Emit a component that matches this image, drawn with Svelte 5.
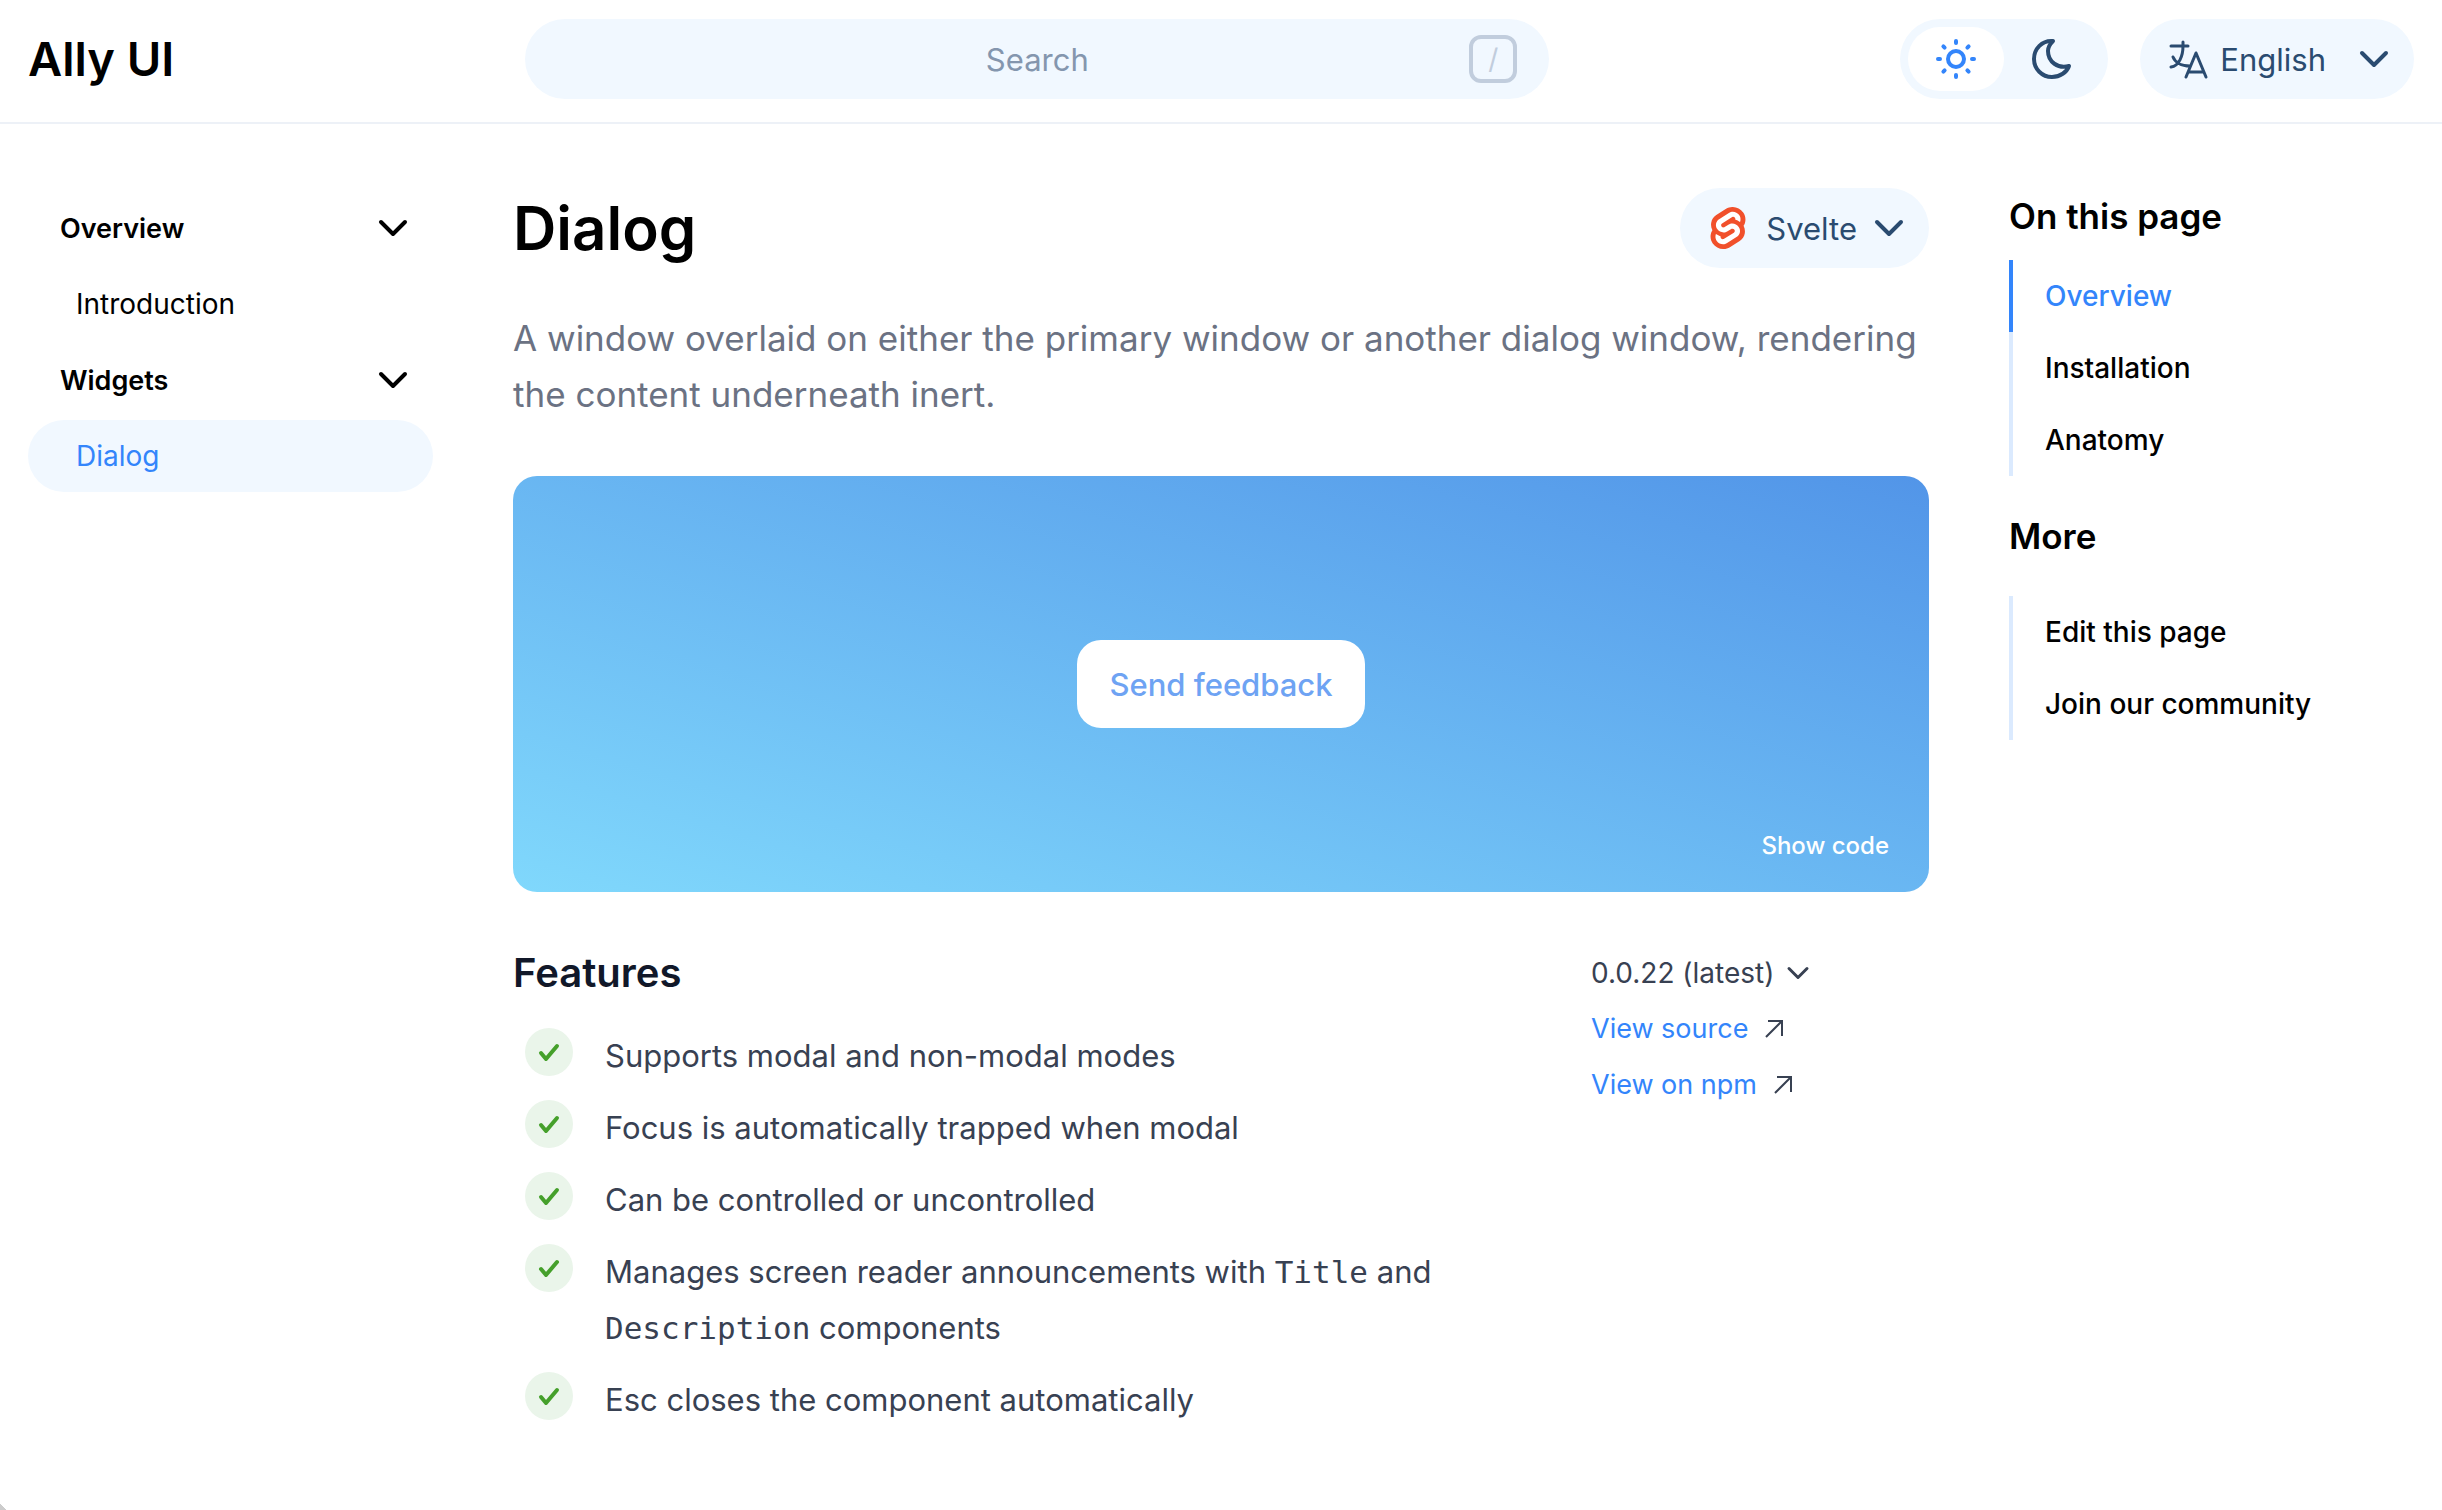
<script lang="ts">
  type Section = { title: string; items: { label: string; current?: boolean }[] };

  const sections: Section[] = [
    { title: 'Overview', items: [{ label: 'Introduction' }] },
    { title: 'Widgets', items: [{ label: 'Dialog', current: true }] }
  ];
  const contents = ['Overview', 'Installation', 'Anatomy'];
  const more = ['Edit this page', 'Join our community'];
  const links = ['View source', 'View on npm'];
  const features: { text: string; code?: boolean }[][] = [
    [{ text: 'Supports modal and non-modal modes' }],
    [{ text: 'Focus is automatically trapped when modal' }],
    [{ text: 'Can be controlled or uncontrolled' }],
    [
      { text: 'Manages screen reader announcements with ' },
      { text: 'Title', code: true },
      { text: ' and ' },
      { text: 'Description', code: true },
      { text: ' components' }
    ],
    [{ text: 'Esc closes the component automatically' }]
  ];

  let active = $state('Overview');
  let theme = $state('light');
</script>

{#snippet chevron()}
  <svg class="chevron" viewBox="0 0 32 20" aria-hidden="true"><path d="M4 4l12 12L28 4" /></svg>
{/snippet}

<header class="topbar">
  <a class="brand" href="#home">Ally UI</a>
  <label class="search">
    <input type="text" placeholder="Search" aria-label="Search" />
    <kbd>/</kbd>
  </label>
  <div class="tools">
    <div class="themes">
      <button class="theme" class:on={theme === 'light'} aria-label="Light theme" onclick={() => (theme = 'light')}>
        <svg viewBox="0 0 48 48" aria-hidden="true">
          <circle cx="24" cy="24" r="8" />
          <path d="M24 6v2M24 40v2M6 24h2M40 24h2M11.4 11.4l1.2 1.2M35.4 35.4l1.2 1.2M11.4 36.6l1.2-1.2M35.4 12.6l1.2-1.2" />
        </svg>
      </button>
      <button class="theme" class:on={theme === 'dark'} aria-label="Dark theme" onclick={() => (theme = 'dark')}>
        <svg viewBox="0 0 48 48" aria-hidden="true">
          <path d="M25 6C14 5 6 14 6 24c0 10 8 18 18 18 8 0 15-5 17-11-11 3-21-4-21-15 0-4 2-7 5-10z" />
        </svg>
      </button>
    </div>
    <button class="pill language">
      <svg class="translate" viewBox="0 0 44 48" aria-hidden="true">
        <path d="M5 11h17M17 7v4c0 10-4 20-12 21M7 22c2 5 8 9 17 9M20 42l10-24 10 24M23 37h14" />
      </svg>
      <span>English</span>
      {@render chevron()}
    </button>
  </div>
</header>

<div class="page">
  <nav class="sidebar" aria-label="Documentation">
    {#each sections as section}
      <button class="group">{section.title}{@render chevron()}</button>
      {#each section.items as item}
        <a class="entry" class:current={item.current} href="#{item.label.toLowerCase()}">{item.label}</a>
      {/each}
    {/each}
  </nav>

  <main>
    <div class="heading">
      <h1>Dialog</h1>
      <button class="pill framework">
        <svg class="logo" viewBox="0 0 98.1 118" aria-hidden="true">
          <path fill="#f1502b" d="M91.8 15.6C80.9-.1 59.2-4.7 43.6 5.2L16.1 22.8C8.6 27.5 3.4 35.2 1.9 43.9c-1.3 7.3-.2 14.8 3.3 21.3-2.4 3.6-4 7.6-4.7 11.8-1.6 8.9.5 18.1 5.7 25.4 11 15.7 32.6 20.3 48.2 10.4l27.5-17.5c7.5-4.7 12.7-12.4 14.2-21.1 1.3-7.3.2-14.8-3.3-21.3 2.4-3.6 4-7.6 4.7-11.8 1.7-9-.4-18.2-5.7-25.5" />
          <path fill="#fff" d="M40.9 103.9c-8.9 2.3-18.2-1.2-23.4-8.7-3.2-4.4-4.4-9.9-3.5-15.3.2-.9.4-1.7.6-2.6l.5-1.6 1.4 1c3.3 2.4 6.9 4.2 10.8 5.4l1 .3-.1 1c-.1 1.4.3 2.9 1.1 4.1 1.6 2.3 4.4 3.4 7.1 2.7.6-.2 1.2-.4 1.7-.7l27.4-17.5c1.4-.9 2.3-2.2 2.6-3.8.3-1.6-.1-3.3-1-4.6-1.6-2.3-4.4-3.3-7.1-2.6-.6.2-1.2.4-1.7.7l-10.5 6.7c-1.7 1.1-3.6 1.9-5.6 2.4-8.9 2.3-18.2-1.2-23.4-8.7-3.1-4.4-4.4-9.9-3.4-15.3.9-5.2 4.1-9.9 8.6-12.7l27.5-17.5c1.7-1.1 3.6-1.9 5.6-2.5 8.9-2.3 18.2 1.2 23.4 8.7 3.2 4.4 4.4 9.9 3.5 15.3-.2.9-.4 1.7-.7 2.6l-.5 1.6-1.4-1c-3.3-2.4-6.9-4.2-10.8-5.4l-1-.3.1-1c.1-1.4-.3-2.9-1.1-4.1-1.6-2.3-4.4-3.3-7.1-2.6-.6.2-1.2.4-1.7.7L32.4 46.1c-1.4.9-2.3 2.2-2.6 3.8s.1 3.3 1 4.6c1.6 2.3 4.4 3.3 7.1 2.6.6-.2 1.2-.4 1.7-.7l10.5-6.7c1.7-1.1 3.6-1.9 5.6-2.5 8.9-2.3 18.2 1.2 23.4 8.7 3.2 4.4 4.4 9.9 3.5 15.3-.9 5.2-4.1 9.9-8.6 12.7l-27.5 17.5c-1.7 1.1-3.6 1.9-5.6 2.5" />
        </svg>
        <span>Svelte</span>
        {@render chevron()}
      </button>
    </div>
    <p class="lead">
      A window overlaid on either the primary window or another dialog window, rendering the content underneath inert.
    </p>

    <section class="preview" aria-label="Preview">
      <button class="feedback">Send feedback</button>
      <button class="show-code">Show code</button>
    </section>

    <div class="details">
      <section>
        <h2>Features</h2>
        <ul class="features">
          {#each features as parts}
            <li>
              <span class="tick">
                <svg viewBox="0 0 24 24" aria-hidden="true"><path d="M4 13l5 6L20 6" /></svg>
              </span>
              <span>{#each parts as part}{#if part.code}<code>{part.text}</code>{:else}{part.text}{/if}{/each}</span>
            </li>
          {/each}
        </ul>
      </section>
      <aside class="meta">
        <button class="version">0.0.22 (latest){@render chevron()}</button>
        {#each links as link}
          <a href="#{link.toLowerCase().replaceAll(' ', '-')}">
            {link}
            <svg class="arrow" viewBox="0 0 20 20" aria-hidden="true"><path d="M2 18L17 3M4 2h14v15" /></svg>
          </a>
        {/each}
      </aside>
    </div>
  </main>

  <aside class="toc">
    <h3>On this page</h3>
    <nav aria-label="On this page">
      {#each contents as item}
        <a class:active={active === item} href="#{item.toLowerCase()}" onclick={() => (active = item)}>{item}</a>
      {/each}
    </nav>
    <h3>More</h3>
    <nav class="more" aria-label="More">
      {#each more as item}
        <a href="#{item.toLowerCase().replaceAll(' ', '-')}">{item}</a>
      {/each}
    </nav>
  </aside>
</div>
<div class="corner"></div>

<style>
  :global(body) {
    background: #fff;
    color: #000;
    font-family: Inter, sans-serif;
    font-size: 28px;
  }
  a {
    color: inherit;
    text-decoration: none;
  }
  button {
    margin: 0;
    padding: 0;
    border: 0;
    background: none;
    color: inherit;
    font: inherit;
    cursor: pointer;
  }
  h1,
  h2,
  h3,
  p,
  ul {
    margin: 0;
    padding: 0;
  }
  svg {
    flex: none;
    fill: none;
    stroke: currentColor;
    stroke-width: 4;
    stroke-linecap: round;
    stroke-linejoin: round;
  }
  .chevron {
    width: 32px;
    height: 20px;
  }

  .topbar {
    display: flex;
    align-items: center;
    justify-content: space-between;
    padding: 19px 28px 23px;
    border-bottom: 2px solid #edf1f7;
  }
  .brand {
    font-size: 47px;
    line-height: 80px;
    font-weight: 600;
  }
  .search {
    display: flex;
    flex: 0 1 1024px;
    align-items: center;
    height: 80px;
    padding: 0 32px;
    box-sizing: border-box;
    border-radius: 40px;
    background: #f1f8ff;
  }
  .search input {
    flex: 1;
    min-width: 0;
    padding: 0 0 0 48px;
    border: 0;
    outline: 0;
    background: none;
    color: #2a4b70;
    font: inherit;
    font-size: 31px;
    text-align: center;
  }
  .search input::placeholder {
    color: #8496ae;
    opacity: 1;
  }
  kbd {
    width: 48px;
    height: 48px;
    box-sizing: border-box;
    border: 4px solid #c1cddd;
    border-radius: 12px;
    color: #c1cddd;
    font-family: inherit;
    font-size: 28px;
    line-height: 40px;
    text-align: center;
  }
  .tools {
    display: flex;
    gap: 32px;
    color: #2a4b70;
  }
  .themes {
    display: flex;
    padding: 8px;
    border-radius: 40px;
    background: #f1f8ff;
  }
  .theme {
    display: flex;
    align-items: center;
    justify-content: center;
    width: 96px;
    height: 64px;
    border-radius: 32px;
  }
  .theme svg {
    width: 48px;
    height: 48px;
  }
  .theme.on {
    background: #fff;
    color: #3385fb;
  }
  .pill {
    display: flex;
    align-items: center;
    height: 80px;
    border-radius: 40px;
    background: #f1f8ff;
    color: #2a4b70;
    font-size: 31px;
  }
  .language {
    padding: 0 24px 0 26px;
  }
  .language span {
    margin: 0 32px 0 10px;
  }
  .translate {
    width: 44px;
    height: 48px;
    stroke-width: 3;
  }

  .page {
    display: grid;
    grid-template-columns: 405px minmax(0, 1fr) 405px;
    gap: 80px;
    padding: 64px 28px 60px;
  }
  .sidebar {
    display: flex;
    flex-direction: column;
    gap: 4px;
    margin-top: 4px;
  }
  .group,
  .entry {
    display: flex;
    align-items: center;
    height: 72px;
    border-radius: 36px;
  }
  .group {
    justify-content: space-between;
    padding: 0 24px 0 32px;
    font-size: 27px;
    font-weight: 600;
  }
  .entry {
    padding: 0 48px;
  }
  .entry.current {
    background: #f1f8ff;
    color: #3385fb;
  }

  .heading {
    display: flex;
    align-items: center;
    justify-content: space-between;
  }
  h1 {
    font-size: 60px;
    line-height: 80px;
    font-weight: 600;
  }
  .framework {
    padding: 0 24px 0 30px;
  }
  .logo {
    width: 36px;
    height: 42px;
    stroke: none;
  }
  .framework span {
    margin: 0 16px 0 20px;
  }
  .lead {
    margin-top: 42px;
    color: #6b7283;
    font-size: 35px;
    line-height: 56px;
  }
  .preview {
    display: grid;
    place-items: center;
    grid-template-rows: 1fr auto 1fr;
    height: 416px;
    margin-top: 54px;
    padding: 24px 40px;
    box-sizing: border-box;
    border-radius: 24px;
    background: linear-gradient(to top right, #80d8fc, #5295e8);
  }
  .feedback {
    grid-row: 2;
    height: 88px;
    padding: 0 32px;
    border-radius: 24px;
    background: #fff;
    color: #6ea3f3;
    font-size: 31px;
    font-weight: 500;
  }
  .show-code {
    grid-row: 3;
    place-self: end;
    color: #fff;
    font-size: 24px;
    line-height: 44px;
    font-weight: 500;
  }
  .details {
    display: grid;
    grid-template-columns: minmax(0, 1fr) 338px;
    gap: 96px;
    margin-top: 53px;
  }
  h2 {
    color: #111829;
    font-size: 40px;
    line-height: 56px;
    font-weight: 600;
  }
  .features {
    display: flex;
    flex-direction: column;
    gap: 16px;
    margin-top: 27px;
    padding-left: 12px;
    list-style: none;
    color: #384152;
    font-size: 31px;
    line-height: 56px;
  }
  .features li {
    display: flex;
    align-items: flex-start;
    gap: 32px;
  }
  .tick {
    display: flex;
    flex: none;
    align-items: center;
    justify-content: center;
    width: 48px;
    height: 48px;
    border-radius: 50%;
    background: #eaf5ea;
    color: #45a02b;
  }
  .tick svg {
    width: 24px;
    height: 24px;
  }
  code {
    font-family: 'DejaVu Sans Mono', monospace;
    line-height: 1;
  }
  .meta {
    display: flex;
    flex-direction: column;
    align-items: flex-start;
    color: #384152;
    line-height: 56px;
  }
  .version,
  .meta a {
    display: flex;
    align-items: center;
  }
  .meta a {
    gap: 16px;
    color: #3385fb;
    font-size: 27px;
  }
  .version {
    gap: 12px;
  }
  .version .chevron {
    width: 24px;
  }
  .arrow {
    width: 20px;
    height: 20px;
    color: #384152;
    stroke-width: 2;
    stroke-linecap: butt;
    stroke-linejoin: miter;
  }

  .toc h3 {
    font-size: 35px;
    line-height: 56px;
    font-weight: 600;
  }
  .toc nav {
    display: flex;
    flex-direction: column;
    margin: 16px 0 32px;
  }
  .toc nav.more {
    margin-top: 32px;
  }
  .toc a {
    padding-left: 32px;
    border-left: 4px solid #dbeafe;
    line-height: 72px;
    font-weight: 500;
  }
  .toc a.active {
    border-color: #3385fb;
    color: #3385fb;
  }
  .corner {
    position: fixed;
    bottom: 0;
    left: 0;
    width: 7px;
    height: 7px;
    background: linear-gradient(to top right, #ccc 50%, transparent 50%);
  }
</style>
